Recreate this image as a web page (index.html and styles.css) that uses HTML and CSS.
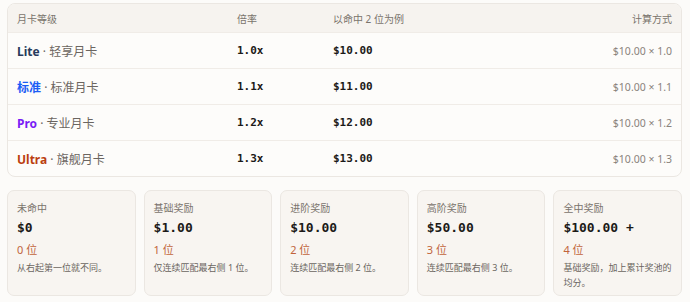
FILE: index.html
```html
<!DOCTYPE html>
<html lang="zh-CN">
<head>
  <meta charset="UTF-8" />
  <meta name="viewport" content="width=device-width,initial-scale=1.0" />
  <title>月卡奖励</title>
  <link rel="stylesheet" href="styles.css">
</head>
<body>
  <div class="page">
    <!-- tier table -->
    <div class="tier-table">
      <div class="row head">
        <div class="cell">月卡等级</div>
        <div class="cell">倍率</div>
        <div class="cell">以命中 2 位为例</div>
        <div class="cell right">计算方式</div>
      </div>
      <div class="row">
        <div class="cell"><span class="tier lite">Lite</span> · 轻享月卡</div>
        <div class="cell mono">1.0x</div>
        <div class="cell mono">$10.00</div>
        <div class="cell right calc">$10.00 × 1.0</div>
      </div>
      <div class="row">
        <div class="cell"><span class="tier std">标准</span> · 标准月卡</div>
        <div class="cell mono">1.1x</div>
        <div class="cell mono">$11.00</div>
        <div class="cell right calc">$10.00 × 1.1</div>
      </div>
      <div class="row">
        <div class="cell"><span class="tier pro">Pro</span> · 专业月卡</div>
        <div class="cell mono">1.2x</div>
        <div class="cell mono">$12.00</div>
        <div class="cell right calc">$10.00 × 1.2</div>
      </div>
      <div class="row">
        <div class="cell"><span class="tier ultra">Ultra</span> · 旗舰月卡</div>
        <div class="cell mono">1.3x</div>
        <div class="cell mono">$13.00</div>
        <div class="cell right calc">$10.00 × 1.3</div>
      </div>
    </div>

    <!-- prize cards -->
    <div class="prizes">
      <div class="prize">
        <div class="prize-label">未命中</div>
        <div class="prize-amount">$0</div>
        <div class="prize-bits">0 位</div>
        <div class="prize-desc">从右起第一位就不同。</div>
      </div>
      <div class="prize">
        <div class="prize-label">基础奖励</div>
        <div class="prize-amount">$1.00</div>
        <div class="prize-bits">1 位</div>
        <div class="prize-desc">仅连续匹配最右侧 1 位。</div>
      </div>
      <div class="prize">
        <div class="prize-label">进阶奖励</div>
        <div class="prize-amount">$10.00</div>
        <div class="prize-bits">2 位</div>
        <div class="prize-desc">连续匹配最右侧 2 位。</div>
      </div>
      <div class="prize">
        <div class="prize-label">高阶奖励</div>
        <div class="prize-amount">$50.00</div>
        <div class="prize-bits">3 位</div>
        <div class="prize-desc">连续匹配最右侧 3 位。</div>
      </div>
      <div class="prize">
        <div class="prize-label">全中奖励</div>
        <div class="prize-amount">$100.00 +</div>
        <div class="prize-bits">4 位</div>
        <div class="prize-desc">基础奖励，加上累计奖池的均分。</div>
      </div>
    </div>
  </div>
</body>
</html>
```

FILE: styles.css
```css
html,body{margin:0;background:#fcfbf9}
body{
  font-family: "Noto Sans", "Noto Sans CJK SC", sans-serif;
  color: #3a3631;
}
.page {
  padding: 3px 8px 0 7px;
}

/* Table of tiers */
.tier-table {
  border: 1px solid #ebe7e2;
  border-radius: 8px;
  overflow: hidden;
  background: #fdfcfa;
}
.row {
  display: grid;
  grid-template-columns: 220px 96px 1fr 160px;
  height: 35px;
  align-items: center;
  border-top: 1px solid #f0ece7;
}
.row.head {
  height: 28px;
  border-top: none;
  background: #f6f3ef;
}
.cell {
  padding: 0 9px;
  font-size: 12px;
  color: #6b6560;
  white-space: nowrap;
}
.head .cell {
  font-size: 10px;
  color: #7a736c;
}
.right { text-align: right; }
.mono {
  font-family: "DejaVu Sans Mono", monospace;
  font-weight: bold;
  font-size: 11px;
  color: #1c1a18;
}
.calc {
  font-size: 10.5px;
  color: #8a837c;
}
.tier { font-weight: bold; }
.tier.lite { color: #283a5c; }
.tier.std { color: #1b5cf5; }
.tier.pro { color: #7a1cf5; }
.tier.ultra { color: #bb3f10; }

/* Prize cards */
.prizes {
  display: grid;
  grid-template-columns: repeat(5, 1fr);
  gap: 8px;
  margin-top: 13px;
}
.prize {
  background: #f8f5f1;
  border: 1px solid #ebe7e2;
  border-radius: 7px;
  padding: 9px 9px 0;
  height: 95px;
}
.prize-label {
  font-size: 10px;
  color: #7a736c;
  line-height: 16px;
}
.prize-amount {
  font-family: "DejaVu Sans Mono", monospace;
  font-weight: bold;
  font-size: 13px;
  color: #1c1a18;
  line-height: 22px;
  margin-top: 1px;
}
.prize-bits {
  font-size: 11px;
  color: #c1643b;
  line-height: 20px;
  margin-top: 1px;
}
.prize-desc {
  font-size: 9px;
  color: #6b6560;
  line-height: 15px;
}
```
